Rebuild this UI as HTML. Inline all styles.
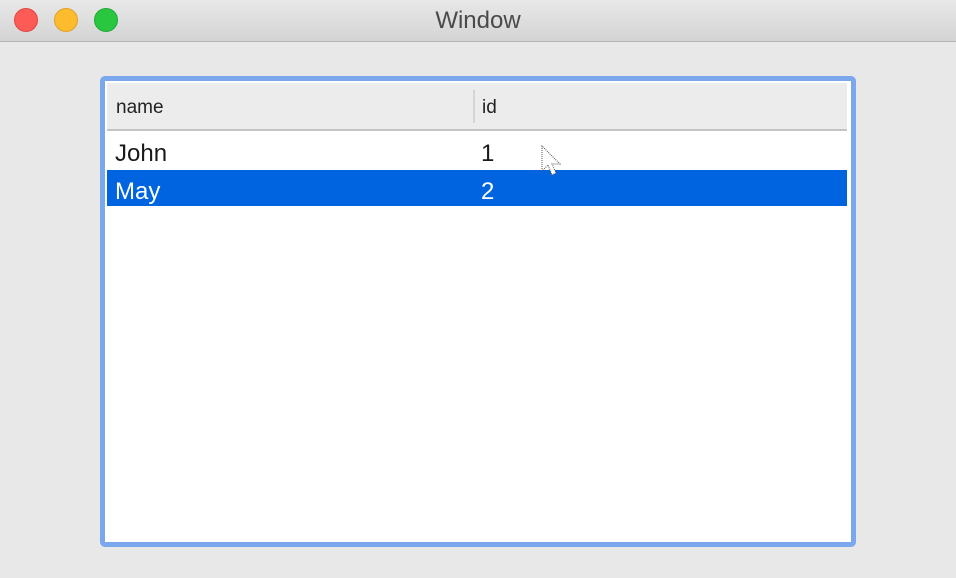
<!DOCTYPE html>
<html><head><style>
body{margin:0;width:956px;height:578px;background:#e8e8e8;font-family:"Liberation Sans",sans-serif;position:relative;overflow:hidden}
.tb{position:absolute;left:0;top:0;width:956px;height:41px;background:linear-gradient(#e8e8e8,#d4d4d4);border-bottom:1px solid #b5b5b5}
.dot{position:absolute;top:8px;width:24px;height:24px;border-radius:50%}
.title{position:absolute;top:0;left:0;width:956px;text-align:center;line-height:41px;font-size:24px;color:#4a4a4a}
.frame{position:absolute;left:100px;top:76px;width:746px;height:461px;border:5px solid #7ba7ec;border-radius:5px;background:#fff}
.hdr{position:absolute;left:2px;top:2px;width:740px;height:46px;background:#ececec;border-bottom:2px solid #c4c4c4}
.h{position:absolute;top:0;line-height:50px;font-size:19px;color:#222}
.div{position:absolute;left:366px;top:7px;width:2px;height:33px;background:#d5d5d5}
.row{position:absolute;left:2px;width:740px;font-size:24px}
.c{position:absolute;left:8px}
.c2{position:absolute;left:374px}
</style></head><body>
<div class="tb">
<div class="dot" style="left:14px;background:#fc5c55;border:1px solid #e2463f;width:22px;height:22px"></div>
<div class="dot" style="left:54px;background:#fdbc2e;border:1px solid #e0a028;width:22px;height:22px"></div>
<div class="dot" style="left:94px;background:#29c73f;border:1px solid #20a934;width:22px;height:22px"></div>
<div class="title">Window</div>
</div>
<div class="frame">
<div class="hdr"><span class="h" style="left:9px">name</span><div class="div"></div><span class="h" style="left:375px">id</span></div>
<div class="row" style="top:50px;height:39px;line-height:45px;color:#1a1a1a"><span class="c">John</span><span class="c2">1</span></div>
<div class="row" style="top:89px;height:36px;line-height:43px;background:#0064e1;color:#fff"><span class="c">May</span><span class="c2">2</span></div>
</div>
<svg style="position:absolute;left:540px;top:145px" width="22" height="36" viewBox="0 0 22 36"><path d="M2 1 L2 26 L8 20 L12 30 L16 28 L12 19 L20 19 Z" fill="#fff" stroke="#555" stroke-width="1" stroke-dasharray="1 1"/></svg>
</body></html>
